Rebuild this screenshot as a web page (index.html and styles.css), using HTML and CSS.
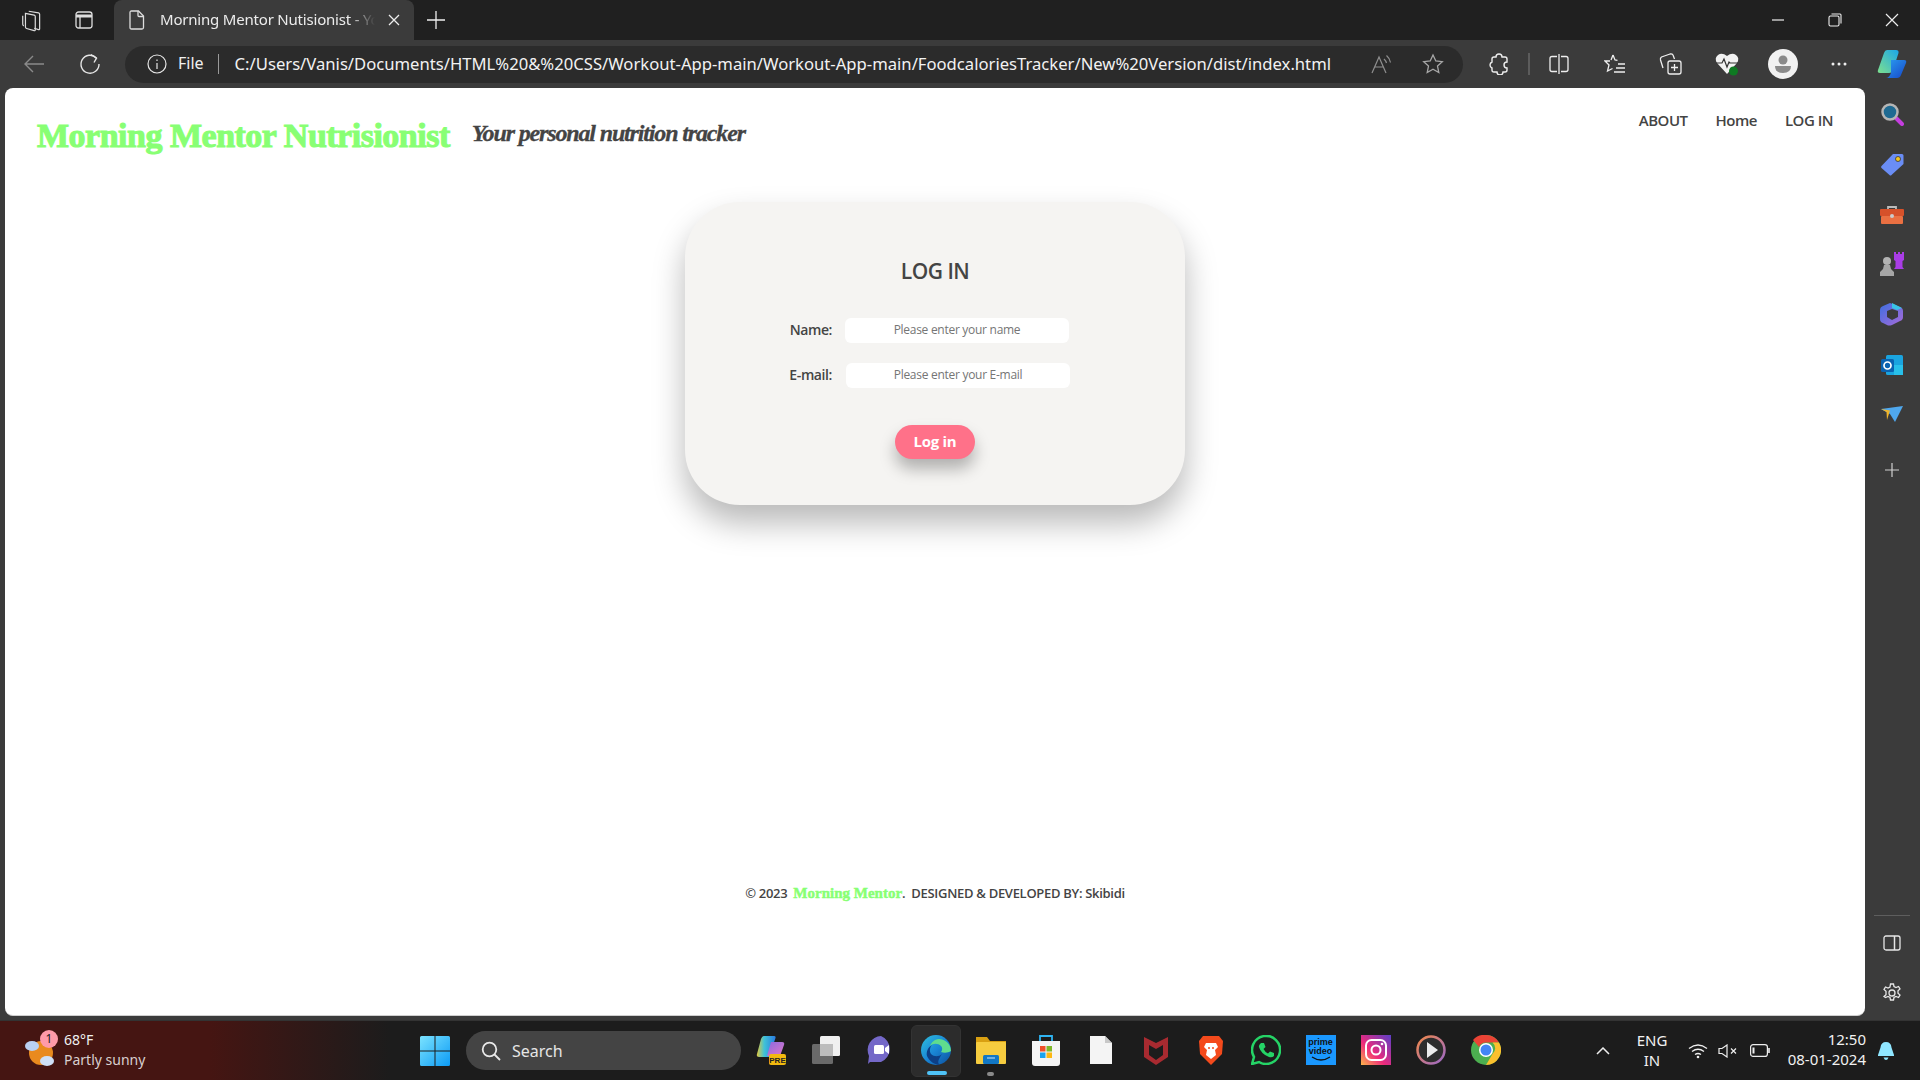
FILE: index.html
```html
<!DOCTYPE html>
<html lang="en">
<head>
<meta charset="utf-8">
<title>Morning Mentor Nutrisionist</title>
<link rel="stylesheet" href="styles.css">
</head>
<body>
<div class="tabbar">
  <div class="slot40"><svg width="24" height="24" viewBox="0 0 22 22" fill="none" stroke="#ddd" stroke-width="1.100"><path d="M8 3l9 1.500q1 .3 1 1.300V19q0 1-1 .8l-4-1.200"/><path d="M5 5l8 1.500q1 .2 1 1.200V20q0 1-1 .8l-7-2q-1-.3-1-1.300z"/><path d="M2.500 7v8q0 1 1 1.400"/></svg></div>
  <div class="slot40 slot-second"><svg width="18" height="18" viewBox="0 0 18 18" fill="none" stroke="#ddd" stroke-width="1.300"><rect x="1" y="1" width="16" height="16" rx="2.500"/><path d="M1 5h16" stroke-width="3"/><path d="M5 5v12"/></svg></div>
  <div class="tab">
    <svg width="16" height="20" viewBox="0 0 16 20" fill="none" stroke="#ddd" stroke-width="1.300"><path d="M2.500 1h7l5 5v11.500q0 1.500-1.500 1.500h-10.500q-1.500 0-1.500-1.500v-15q0-1.500 1.500-1.500z"/><path d="M9 1v4.500q0 1 1 1h4.500"/></svg>
    <span class="tab-title">Morning Mentor Nutisionist - Yo</span>
    <svg class="tab-x" width="12" height="12" viewBox="0 0 12 12" stroke="#eee" stroke-width="1.300"><path d="M1 1l10 10M11 1L1 11"/></svg>
  </div>
  <div class="slot40"><svg width="18" height="18" viewBox="0 0 18 18" stroke="#eee" stroke-width="1.300"><path d="M9 0v18M0 9h18"/></svg></div>
  <div class="grow"></div>
  <div class="winbtn"><svg width="14" height="14" viewBox="0 0 14 14" stroke="#eee" stroke-width="1.200"><path d="M1 7h12"/></svg></div>
  <div class="winbtn"><svg width="14" height="14" viewBox="0 0 14 14" fill="none" stroke="#eee" stroke-width="1.100"><rect x="1" y="3" width="10" height="10" rx="1.500"/><path d="M3.500 1H12q1 0 1 1v8.500"/></svg></div>
  <div class="winbtn"><svg width="14" height="14" viewBox="0 0 14 14" stroke="#eee" stroke-width="1.200"><path d="M1 1l12 12M13 1L1 13"/></svg></div>
</div>

<div class="toolbar">
  <div class="slot44"><svg width="22" height="20" viewBox="0 0 22 20" fill="none" stroke="#8a8a8a" stroke-width="1.400"><path d="M21 10H2M10 2l-8 8 8 8"/></svg></div>
  <div class="slot44"><svg width="22" height="22" viewBox="0 0 22 22" fill="none" stroke="#e6e6e6" stroke-width="1.400"><path d="M17.500 5A9 9 0 1 0 20 11"/><path d="M12 1.500l5.500 3.700L15 9.500"/></svg></div>
  <div class="address">
    <svg width="20" height="20" viewBox="0 0 20 20" fill="none" stroke="#e6e6e6" stroke-width="1.200"><circle cx="10" cy="10" r="9"/><path d="M10 9v6M10 5.500v1.500"/></svg>
    <span class="addr-file">File</span>
    <span class="addr-sep"></span>
    <span class="addr-url">C:/Users/Vanis/Documents/HTML%20&amp;%20CSS/Workout-App-main/Workout-App-main/FoodcaloriesTracker/New%20Version/dist/index.html</span>
    <div class="grow"></div>
    <svg class="addr-read" width="22" height="20" viewBox="0 0 22 20" fill="none" stroke="#8f8f8f" stroke-width="1.200"><path d="M1 19L8 3l7 16M3.500 13h9"/><path d="M13 5q2 2 2.500 4M15.500 1.500q3.500 3 4 7"/></svg>
    <svg class="addr-star" width="22" height="22" viewBox="0 0 22 22" fill="none" stroke="#a8a8a8" stroke-width="1.300"><path d="M11 2l2.800 6 6.500.7-4.800 4.400 1.300 6.400L11 16.300 5.200 19.500l1.300-6.400L1.700 8.700 8.200 8z"/></svg>
  </div>
  <div class="slot56 first-tool"><svg width="20" height="22" viewBox="0 0 20 22" fill="none" stroke="#eee" stroke-width="1.400"><path d="M7 4q0-3 3-3t3 3h3q2 0 2 2v3q-3 0-3 3t3 3v2q0 2-2 2h-2q0 3-3 3t-3-3H5q-2 0-2-2v-2q-2-1-2-3t2-3V6q0-2 2-2z"/></svg></div>
  <span class="tool-sep"></span>
  <div class="slot56"><svg width="20" height="20" viewBox="0 0 20 20" fill="none" stroke="#eee" stroke-width="1.300"><path d="M8 2.500H3q-2 0-2 2v11q0 2 2 2h5M12 2.500h5q2 0 2 2v11q0 2-2 2h-5M10 0v20"/></svg></div>
  <div class="slot56"><svg width="22" height="22" viewBox="0 0 22 22" fill="none" stroke="#eee" stroke-width="1.300"><path d="M9 2l2 5 2.500.3M6 8H1l4 4-1.500 6 5-2.500"/><path d="M9 2L7 7M14 11h7M12 15h9M10 19h11"/></svg></div>
  <div class="slot56"><svg width="24" height="24" viewBox="0 0 24 24" fill="none" stroke="#eee" stroke-width="1.300"><path d="M4 16L1.500 8q-.5-2 1-3L11 2q2-.5 3 1l1.500 4"/><rect x="9" y="9" width="13" height="13" rx="2"/><path d="M15.500 12v7M12 15.500h7"/></svg></div>
  <div class="slot56"><svg width="26" height="26" viewBox="0 0 26 26"><path d="M13 23L3 12q-3-5 1-8t9 1q5-4 9-1t1 8z" fill="#f2f2f2"/><path d="M2 12h6l2-4 3 8 2-5 1 1h8" fill="none" stroke="#333" stroke-width="1.200"/><circle cx="19.500" cy="20" r="4.500" fill="#0e7a22"/></svg></div>
  <div class="slot56"><svg width="30" height="30" viewBox="0 0 30 30"><circle cx="15" cy="15" r="15" fill="#f1f1f1"/><circle cx="15" cy="11" r="4.500" fill="#8a8a8a"/><path d="M7 17h16q0 7-8 7t-8-7z" fill="#8a8a8a"/></svg></div>
  <div class="slot56"><svg width="16" height="4" viewBox="0 0 16 4" fill="#eee"><circle cx="2" cy="2" r="1.500"/><circle cx="8" cy="2" r="1.500"/><circle cx="14" cy="2" r="1.500"/></svg></div>
  <div class="slot50"><svg width="30" height="30" viewBox="0 0 30 30"><defs><linearGradient id="cpa" x1="0" y1="1" x2="1" y2="0"><stop offset="0" stop-color="#7de08e"/><stop offset="1" stop-color="#1ba6e8"/></linearGradient><linearGradient id="cpb" x1="0" y1="0" x2="1" y2="1"><stop offset="0" stop-color="#2a9df0"/><stop offset="1" stop-color="#1747c9"/></linearGradient></defs><path d="M10 1h9q3 0 2.500 3L16 21q-1 3-4 3H3q-3 0-2-3L7 4q1-3 3-3z" fill="url(#cpa)"/><path d="M14 11h13q3 0 2 3l-5 12q-1 3-4 3H9q3 0 5-5z" fill="url(#cpb)"/></svg></div>
</div>

<div class="workspace">
  <main class="page">
    <header class="site-header">
      <h1 class="brand">Morning Mentor Nutrisionist</h1>
      <p class="tagline">Your personal nutrition tracker</p>
      <nav class="site-nav"><a>ABOUT</a><a>Home</a><a>LOG IN</a></nav>
    </header>
    <section class="card">
      <h2 class="card-title">LOG IN</h2>
      <form class="form">
        <label class="form-label">Name:</label>
        <input class="form-input" placeholder="Please enter your name">
        <label class="form-label">E-mail:</label>
        <input class="form-input shifted" placeholder="Please enter your E-mail">
      </form>
      <button class="login-btn" type="button">Log in</button>
    </section>
    <footer class="site-footer">
      <span>© 2023</span>
      <span class="footer-brand">Morning Mentor</span><span class="footer-dot">.</span>
      <span class="footer-credit">DESIGNED &amp; DEVELOPED BY: Skibidi</span>
    </footer>
  </main>
  <aside class="sidebar">
    <div class="side-slot"><svg width="24" height="24" viewBox="0 0 24 24"><path d="M14 14l8 8" stroke="#c53ee0" stroke-width="4" stroke-linecap="round"/><circle cx="10" cy="10" r="7.500" fill="#1f6a92" stroke="#b5b5b5" stroke-width="2.500"/></svg></div>
    <div class="side-slot"><svg width="24" height="24" viewBox="0 0 24 24"><path d="M1.500 14L13 2h9q1.500 0 1.500 1.500V12L11.500 23q-1 1-2 0l-8-7q-1-1 0-2z" fill="#6a8df5"/><circle cx="18" cy="7" r="2.500" fill="#f3c623" stroke="#333" stroke-width=".8"/></svg></div>
    <div class="side-slot side-tool"><svg width="24" height="20" viewBox="0 0 24 20"><path d="M8 5V2h8v3" fill="none" stroke="#bbb" stroke-width="1.800"/><rect y="4" width="24" height="7" rx="1" fill="#d6512a"/><rect x="1" y="11" width="22" height="8" rx="1" fill="#ea7042"/><circle cx="12" cy="11" r="2" fill="#ccc"/></svg></div>
    <div class="side-slot"><svg width="24" height="24" viewBox="0 0 24 24"><path d="M14 0h2v2h2V0h2v2h2V0h2v8l-1.500 1v6l1.500 2H14l1.500-2V9L14 8z" fill="#a93de6"/><circle cx="7" cy="9" r="4" fill="#b3b3b3"/><path d="M4 13h6l1 4 3 3v4H0v-4l3-3z" fill="#a6a6a6"/></svg></div>
    <div class="side-slot"><svg width="24" height="24" viewBox="0 0 24 24"><defs><linearGradient id="m3a" x1="0" y1="0" x2="1" y2="1"><stop offset="0" stop-color="#3d6fe0"/><stop offset="1" stop-color="#a86ad8"/></linearGradient></defs><path d="M10 1l10 4q3 1 3 4v6q0 3-3 4l-8 4q-3 1-5 0l-4-2q-3-1-3-4V8q0-3 3-4z" fill="url(#m3a)"/><path d="M12 7l6 2v6l-6 3-5-3V9z" fill="#3b3b3b"/><path d="M12 1l10 5-5 2-5-2z" fill="#39c3e6"/></svg></div>
    <div class="side-slot side-outlook"><svg width="22" height="20" viewBox="0 0 22 20"><rect x="5" y="0" width="17" height="20" rx="1.500" fill="#1aa4df"/><rect x="13" y="10" width="9" height="10" fill="#28c0ea"/><rect x="0" y="4" width="13" height="13" rx="1.500" fill="#0a62b0"/><circle cx="6.500" cy="10.500" r="3.500" fill="none" stroke="#fff" stroke-width="1.700"/></svg></div>
    <div class="side-slot"><svg width="22" height="16" viewBox="0 0 22 16"><path d="M0 3l22-3-8 16-5-8z" fill="#4fa8ee"/><path d="M0 3l9 1.500L6 14 5.500 6z" fill="#f0b429"/></svg></div>
    <div class="side-slot side-plus"><svg width="14" height="14" viewBox="0 0 14 14" stroke="#d0d0d0" stroke-width="1.200"><path d="M7 0v14M0 7h14"/></svg></div>
    <div class="grow"></div>
    <span class="side-divider"></span>
    <div class="side-slot side-panel"><svg width="18" height="16" viewBox="0 0 18 16" fill="none" stroke="#e6e6e6" stroke-width="1.300"><rect x="1" y="1" width="16" height="14" rx="2"/><path d="M11.500 1v14" stroke-width="1.500"/></svg></div>
    <div class="side-slot side-gear"><svg width="20" height="20" viewBox="0 0 20 20" fill="none" stroke="#e6e6e6" stroke-width="1.300"><circle cx="10" cy="10" r="3"/><path d="M8.500 1h3l.5 2.500 2 1 2.500-1 1.500 2.500-2 1.800v2.400l2 1.800-1.500 2.500-2.500-1-2 1-.5 2.500h-3l-.5-2.500-2-1-2.500 1L2 13.500l2-1.800V8.300L2 6.500 3.500 4l2.500 1 2-1z"/></svg></div>
  </aside>
</div>

<div class="taskbar">
  <div class="weather">
    <div class="weather-icon">
      <svg width="34" height="34" viewBox="0 0 34 34"><circle cx="18" cy="19" r="12" fill="#e98a1e"/><ellipse cx="9" cy="12" rx="7" ry="5" fill="#b9d0f2"/><ellipse cx="24" cy="27" rx="7" ry="5" fill="#cfe0f7"/></svg>
      <span class="weather-badge">1</span>
    </div>
    <div class="weather-text"><span class="weather-temp">68°F</span><span class="weather-desc">Partly sunny</span></div>
  </div>
  <svg class="win" width="30" height="30" viewBox="0 0 30 30"><defs><linearGradient id="wg" x1="0" y1="0" x2="1" y2="1"><stop offset="0" stop-color="#7be3ff"/><stop offset="1" stop-color="#0c9bf5"/></linearGradient></defs><path d="M0 1.500Q0 0 1.500 0H14.500V14.500H0zM15.500 0H28.500Q30 0 30 1.500V14.500H15.500zM0 15.500H14.500V30H1.500Q0 30 0 28.500zM15.500 15.500H30V28.500Q30 30 28.500 30H15.500z" fill="url(#wg)"/></svg>
  <div class="search">
    <svg width="20" height="20" viewBox="0 0 20 20" fill="none" stroke="#e8e8e8" stroke-width="1.800"><circle cx="8.500" cy="8.500" r="6.800"/><path d="M13.500 13.500L19 19"/></svg>
    <span>Search</span>
  </div>
  <div class="apps">
    <div class="app"><svg width="30" height="30" viewBox="0 0 30 30"><defs><linearGradient id="cqa" x1="0" y1="0" x2="1" y2="0"><stop offset="0" stop-color="#e3c83a"/><stop offset=".4" stop-color="#3fc2d8"/><stop offset="1" stop-color="#2a7be0"/></linearGradient><linearGradient id="cqb" x1="0" y1="0" x2="1" y2="1"><stop offset="0" stop-color="#8a6ae0"/><stop offset="1" stop-color="#e078c8"/></linearGradient></defs><path d="M8 1h10q2 0 1.500 2L13 22H3q-3 0-2-3L5 4q1-3 3-3z" fill="url(#cqa)"/><path d="M15 7h11q3 0 2 3l-4 11H11z" fill="url(#cqb)"/><rect x="13" y="19" width="17" height="11" rx="2" fill="#f2b90f"/><text x="21.500" y="27.500" class="pre">PRE</text></svg></div>
    <div class="app"><svg width="30" height="30" viewBox="0 0 30 30"><rect x="9" y="1" width="20" height="20" rx="1.500" fill="#f0f0f0"/><rect x="1" y="9" width="21" height="20" rx="1.500" fill="#6a6a6a"/><rect x="9" y="9" width="13" height="12" fill="#bdbdbd"/></svg></div>
    <div class="app"><svg width="30" height="30" viewBox="0 0 30 30"><path d="M15 1a14 14 0 0 1 0 26H4l-2 2 1-8A14 14 0 0 1 15 1z" fill="#7468c8"/><rect x="8" y="10" width="10" height="9" rx="1.500" fill="#fff"/><path d="M19 13l4-3v9l-4-3z" fill="#fff"/></svg></div>
    <div class="app app-active"><svg width="30" height="32" viewBox="0 0 30 32"><defs><linearGradient id="eg" x1="0" y1="0" x2="1" y2="1"><stop offset="0" stop-color="#2fc1dc"/><stop offset=".5" stop-color="#1a86d6"/><stop offset="1" stop-color="#0c4f9c"/></linearGradient></defs><circle cx="15" cy="16" r="15" fill="url(#eg)"/><path d="M30 17c0-8-7-12-12-12-5 0-8 4-9 7 3-3 8-3 11 0 2 2 1 5 0 6 3 1 7 1 10-1z" fill="#5fdc8e"/><path d="M21 20c-3 3-8 3-11 0-2-3-1-7 1-9-4 2-6 7-5 11 2 5 8 9 13 9-3-2-2-5 2-11z" fill="#0d3f86"/></svg><span class="indicator"></span></div>
    <div class="app"><svg width="30" height="30" viewBox="0 0 30 30"><path d="M0 2h11l3 4h16v5H0z" fill="#d9a012"/><rect y="7" width="30" height="22" rx="1" fill="#f6cc3f"/><rect x="7" y="20" width="16" height="9" rx="1.500" fill="#1277c4"/><path d="M11 23h8" stroke="#cfe8fb"/></svg><span class="dot"></span></div>
    <div class="app"><svg width="30" height="32" viewBox="0 0 30 32"><path d="M9 8V2h12v6" fill="none" stroke="#2fb4f2" stroke-width="1.800"/><path d="M1 7h28v22q0 3-3 3H4q-3 0-3-3z" fill="#f4f4f4"/><rect x="9" y="12" width="5.500" height="5.500" fill="#f0502a"/><rect x="15.500" y="12" width="5.500" height="5.500" fill="#7eb82a"/><rect x="9" y="18.500" width="5.500" height="5.500" fill="#1ba3ef"/><rect x="15.500" y="18.500" width="5.500" height="5.500" fill="#fdb813"/></svg></div>
    <div class="app"><svg width="22" height="28" viewBox="0 0 22 28"><path d="M0 0h15l7 7v21H0z" fill="#f4f4f4"/><path d="M15 0l7 7h-7z" fill="#c8c8c8"/></svg></div>
    <div class="app"><svg width="26" height="30" viewBox="0 0 26 30"><path d="M1 2l12 6 12-6v20l-12 8-12-8zM6 10v10l7 5 7-5V10l-7 4z" fill="#a82a30" fill-rule="evenodd"/></svg></div>
    <div class="app"><svg width="26" height="30" viewBox="0 0 26 30"><path d="M5 1h16l4 5-1 13-11 11L2 19 1 6z" fill="#f44a1c"/><path d="M8 8h10l2 4-3 3 1 5-5 4-5-4 1-5-3-3z" fill="#fff"/><path d="M10 13h2M14 13h2" stroke="#f44a1c" stroke-width="1.500"/></svg></div>
    <div class="app"><svg width="30" height="30" viewBox="0 0 30 30" fill="none"><path d="M1 29l2-7a14 14 0 1 1 5 5z" stroke="#25d366" stroke-width="2.500"/><path d="M10 8l3 0 1.500 4-2 2q1.500 3 4.500 4.500l2-2 4 1.500v3q-2 2-5 1-8-3-10-10-.5-2 2-4z" fill="#25d366"/></svg></div>
    <div class="app"><div class="prime"><span>prime</span><span>video</span><svg width="20" height="6" viewBox="0 0 20 6" fill="none" stroke="#111" stroke-width="1.300"><path d="M1 1q9 6 18 0"/></svg></div></div>
    <div class="app"><svg width="30" height="30" viewBox="0 0 30 30"><defs><linearGradient id="ig" x1="0" y1="1" x2="1" y2="0"><stop offset="0" stop-color="#fdb64a"/><stop offset=".4" stop-color="#ee2a7b"/><stop offset="1" stop-color="#5b3fc8"/></linearGradient></defs><rect width="30" height="30" fill="url(#ig)"/><rect x="5" y="5" width="20" height="20" rx="5.500" fill="none" stroke="#fff" stroke-width="2"/><circle cx="15" cy="15" r="4.500" fill="none" stroke="#fff" stroke-width="2"/><circle cx="21" cy="9" r="1.300" fill="#fff"/></svg></div>
    <div class="app"><svg width="30" height="30" viewBox="0 0 30 30"><defs><linearGradient id="pg" x1="0" y1="0" x2="1" y2="1"><stop offset="0" stop-color="#f0884a"/><stop offset="1" stop-color="#9a68c8"/></linearGradient></defs><circle cx="15" cy="15" r="13.500" fill="#2d2d2d" stroke="url(#pg)" stroke-width="2.500"/><path d="M11 7l11 8-11 8z" fill="#ececec"/></svg></div>
    <div class="app"><svg width="30" height="30" viewBox="0 0 30 30"><circle cx="15" cy="15" r="15" fill="#4caf50"/><path d="M15 0a15 15 0 0 1 13 7.500H15a7.500 7.500 0 0 0-7 4.500L2 5a15 15 0 0 1 13-5z" fill="#ea4335"/><path d="M28 7.500A15 15 0 0 1 15 30l6.500-11a7.500 7.500 0 0 0 0-11.500z" fill="#fbc02d"/><circle cx="15" cy="15" r="7" fill="#fff"/><circle cx="15" cy="15" r="5.500" fill="#4285f4"/></svg></div>
  </div>
  <div class="grow"></div>
  <div class="tray">
    <svg class="tray-chev" width="14" height="8" viewBox="0 0 14 8" fill="none" stroke="#eee" stroke-width="1.500"><path d="M1 7l6-6 6 6"/></svg>
    <div class="tray-lang"><span>ENG</span><span>IN</span></div>
    <svg class="tray-wifi" width="20" height="16" viewBox="0 0 20 16" fill="none" stroke="#eee" stroke-width="1.300"><path d="M1 5.500q9-7 18 0M4 8.500q6-4.500 12 0M7 11.500q3-2 6 0"/><circle cx="10" cy="14" r="1.300" fill="#eee" stroke="none"/></svg>
    <svg class="tray-mute" width="20" height="14" viewBox="0 0 20 14" fill="none" stroke="#eee" stroke-width="1.200"><path d="M1 4.500h3L9 1v12L4 9.500H1z"/><path d="M13 4.500l5 5M18 4.500l-5 5"/></svg>
    <svg class="tray-batt" width="20" height="13" viewBox="0 0 20 13" fill="none" stroke="#eee" stroke-width="1.200"><rect x=".6" y=".6" width="16.800" height="11.800" rx="2.500"/><path d="M3.500 3.500v6" stroke-width="2"/><path d="M19 4v5" stroke-width="1.600"/></svg>
    <div class="tray-clock"><span>12:50</span><span>08-01-2024</span></div>
    <svg class="tray-bell" width="16" height="18" viewBox="0 0 16 18" fill="#8fe6ff"><path d="M8 0q5 0 5.500 5.500L16 13v1H0v-1l2.500-7.500Q3 0 8 0z"/><path d="M5.500 15.500h5q-1 2.500-2.500 2.500t-2.500-2.500z"/></svg>
  </div>
</div>
</body>
</html>
```
FILE: styles.css
```css
* { box-sizing: border-box; }
html, body { margin: 0; padding: 0; height: 100%; }
body {
  width: 1920px; height: 1080px; overflow: hidden;
  display: flex; flex-direction: column;
  background: #3b3b3b; font-family: "Open Sans", sans-serif;
}
.grow { flex: 1 1 auto; }

/* tab strip */
.tabbar { height: 40px; flex: none; display: flex; align-items: center; padding-left: 12px; background: #202020; }
.slot40 { width: 40px; height: 40px; display: flex; align-items: center; justify-content: center; }
.slot-second { margin-left: 12px; }
.tab {
  width: 300px; height: 40px; margin: 0 2px 0 10px; padding: 0 13px 0 15px;
  display: flex; align-items: center; gap: 15px;
  background: #3b3b3b; border-radius: 8px 8px 0 0;
}
.tab-title {
  width: 215px; padding-bottom: 2px; white-space: nowrap;
  font: 15px "Noto Sans", sans-serif; letter-spacing: -.2px; color: #ececec;
  -webkit-mask-image: linear-gradient(90deg, #000 88%, transparent);
  mask-image: linear-gradient(90deg, #000 88%, transparent);
}
.tab-x { margin-left: -2px; }
.winbtn { width: 57px; height: 40px; display: flex; align-items: center; justify-content: center; }

/* toolbar */
.toolbar { height: 48px; flex: none; display: flex; align-items: center; padding-left: 12px; background: #3b3b3b; }
.slot44 { width: 44px; height: 48px; margin-right: 12px; display: flex; align-items: center; justify-content: center; }
.address {
  width: 1338px; height: 37px; margin: 0 8px 0 1px; padding: 0 19px 0 22px;
  display: flex; align-items: center;
  background: #2b2b2b; border-radius: 19px;
}
.addr-file { margin-left: 11px; padding-bottom: 2px; font: 16px "Noto Sans", sans-serif; color: #f0f0f0; }
.addr-sep { width: 1px; height: 20px; margin: 0 16px 0 14px; background: #9a9a9a; }
.addr-url { padding-bottom: 2px; white-space: nowrap; font: 16.65px "Noto Sans", sans-serif; color: #f2f2f2; }
.addr-read { margin-right: 29px; }
.slot56 { width: 56px; height: 48px; display: flex; align-items: center; justify-content: center; }
.slot50 { width: 50px; height: 48px; display: flex; align-items: center; justify-content: center; }
.tool-sep { width: 2px; height: 22px; margin: 0 1px; background: #5c5c5c; }

/* body of the window */
.workspace { height: 932px; flex: none; display: flex; padding-left: 5px; }
.page {
  width: 1860px; height: 928px; display: flex; flex-direction: column;
  background: #fff; border-radius: 8px; overflow: hidden; color: #444;
  border-bottom: 1px solid #cfcfcf;
}
.site-header { height: 114px; padding: 20px 32px 0; display: flex; align-items: flex-start; flex: none; }
.brand {
  margin: 0; font: 700 34px/56px "Liberation Serif", serif; letter-spacing: -.5px;
  color: #88ff74; -webkit-text-stroke: 1.1px #88ff74;
}
.tagline {
  margin: 0 0 0 22px;
  font: italic 700 24px/50px "Liberation Serif", serif; letter-spacing: -1.15px; color: #444;
  -webkit-text-stroke: .3px #444;
}
.site-nav { margin-left: auto; display: flex; gap: 28px; font: 600 15px/24px "Open Sans", sans-serif; letter-spacing: -.5px; color: #444; }

.card {
  width: 500px; height: 303px; margin: 0 auto; padding: 55px 0 0; flex: none;
  display: flex; flex-direction: column; align-items: center;
  background: #f5f4f2; border-radius: 55px;
  box-shadow: 0 18px 32px rgba(0,0,0,.28);
}
.card-title { margin: 0 0 33px; font: 600 21px/28px "Open Sans", sans-serif; letter-spacing: -.5px; color: #444; }
.form { width: 100%; display: grid; grid-template-columns: 147px 224px; column-gap: 13px; row-gap: 20px; align-items: center; }
.form-label { text-align: right; padding-bottom: 2px; font: 600 14px/23px "Open Sans", sans-serif; letter-spacing: -.4px; color: #444; }
.form-input {
  height: 25px; width: 224px; padding: 0 8px 2px; border: 0; outline: 0; border-radius: 6px;
  background: #fff; text-align: center; font: 12px "Open Sans", sans-serif; letter-spacing: -.28px;
}
.form-input::placeholder { color: #757575; opacity: 1; }
.shifted { margin-left: 1px; }
.login-btn {
  width: 80px; height: 34px; margin-top: 37px; padding: 0 0 2px; border: 0; border-radius: 17px;
  background: #ff7189; color: #fff; font: 700 15px "Open Sans", sans-serif; letter-spacing: -.3px;
  box-shadow: 0 10px 16px rgba(0,0,0,.28);
}
.site-footer {
  margin-top: auto; padding-bottom: 113px; display: flex; justify-content: center; align-items: center;
  font: 600 13px/18px "Open Sans", sans-serif; letter-spacing: -.3px; color: #444;
}
.footer-brand { margin-left: 6px; font: 700 15px "Liberation Serif", serif; color: #88ff74; letter-spacing: 0; -webkit-text-stroke: .5px #88ff74; }
.footer-dot { margin-right: 6px; }

/* sidebar */
.sidebar { width: 55px; height: 932px; padding: 1px 1px 0 0; display: flex; flex-direction: column; align-items: center; }
.side-slot { width: 100%; height: 50px; flex: none; display: flex; align-items: center; justify-content: center; }
.side-tool { padding-top: 2px; }
.side-outlook { padding-top: 1px; }
.side-plus { margin-top: 6px; }
.side-divider { width: 36px; height: 1px; flex: none; background: #5e5e5e; }
.side-panel { margin-top: 2px; }
.side-gear { margin-bottom: 2px; }

/* taskbar */
.taskbar {
  height: 60px; flex: none; display: flex; align-items: center;
  background: linear-gradient(90deg, #451512 0, #451512 210px, #1c1c1c 390px);
  border-top: 1px solid #333;
  color: #f1f1f1; font-family: "Noto Sans", sans-serif;
}
.weather { width: 420px; padding-left: 23px; display: flex; align-items: center; gap: 7px; }
.weather-icon { position: relative; width: 34px; height: 34px; }
.weather-badge {
  position: absolute; left: 17px; top: -4px; width: 18px; height: 18px; border-radius: 50%;
  background: #ff9aa8; color: #222; font-size: 12px; line-height: 18px; text-align: center;
}
.weather-text { display: flex; flex-direction: column; padding-bottom: 2px; font-size: 14px; line-height: 20px; }
.weather-desc { color: #d8cfcf; }
.win { flex: none; }
.search {
  width: 275px; height: 39px; margin-left: 16px; padding-left: 15px;
  display: flex; align-items: center; gap: 11px;
  background: rgba(255,255,255,.18); border-radius: 20px; font-size: 16px; color: #e6e6e6;
}
.apps { display: flex; margin-left: 2px; }
.app { position: relative; width: 55px; height: 52px; padding-bottom: 2px; display: flex; align-items: center; justify-content: center; }
.app-active { background: #2c2c2c; border-radius: 6px; margin: 0 2.5px; width: 50px; border: 1px solid #333; }
.indicator { position: absolute; left: 15px; bottom: 1px; width: 20px; height: 4px; border-radius: 2px; background: #4fc3f7; }
.dot { position: absolute; left: 24px; bottom: 1px; width: 7px; height: 4px; border-radius: 2px; background: #8a8a8a; }
.pre { font: 700 8px "Liberation Sans", sans-serif; fill: #222; text-anchor: middle; }
.prime {
  width: 30px; height: 30px; display: flex; flex-direction: column; align-items: center; justify-content: center;
  background: #1a98ff; color: #111; font: 700 9px/9px "Liberation Sans", sans-serif;
}
.tray { display: flex; align-items: center; padding-right: 26px; }
.tray-chev { margin-right: 22px; }
.tray-lang { width: 40px; margin-right: 16px; padding-bottom: 2px; display: flex; flex-direction: column; align-items: center; font-size: 15px; line-height: 20px; }
.tray-wifi { margin-right: 10px; }
.tray-mute { margin-right: 12px; }
.tray-batt { margin-right: 16px; }
.tray-clock { width: 80px; margin-right: 12px; padding-bottom: 3px; display: flex; flex-direction: column; align-items: flex-end; font-size: 15px; line-height: 20px; white-space: nowrap; }
```
